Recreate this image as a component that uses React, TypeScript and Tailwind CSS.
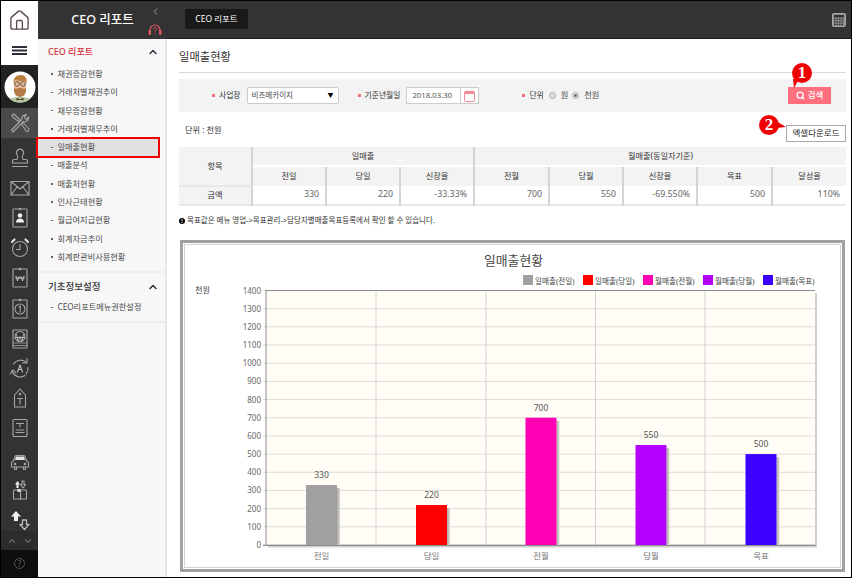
import React from "react";
import { Home, ChevronLeft, ChevronUp, ChevronDown, Search } from "lucide-react";

const S = ({ children, size = 24 }: { children: React.ReactNode; size?: number }) => (
  <svg width={size} height={size} viewBox="0 0 24 24" fill="none" stroke="#a6a6a6" strokeWidth="1.1" strokeLinejoin="round" strokeLinecap="round">
    {children}
  </svg>
);

const railIcons: { h: string; el: React.ReactNode }[] = [
  { h: "h-[30px] bg-[#4a4a4a]", el: <S><path d="M3.500 19L14 8.500C13 6 15 3 18.500 3.500L16 6l2 2.500L20.500 6c.5 3.500-2.500 5.500-5 4.500L5 21z" /><path d="M4 4l2-1 6 6-1.500 1.500L4.500 6zM13.500 13l1.500-1.500 6 6.500c.5 1-1.500 3-2.500 2.500z" /></S> },
  { h: "h-[35px] pt-[5px]", el: <S><path d="M9 8.500a3.500 3.500 0 1 1 6 0c-1 1.500-1 3 0 5h3c1 0 1.500.5 1.500 1.500v2h-15v-2c0-1 .5-1.500 1.500-1.500h3c1-2 1-3.500 0-5zM4.500 20.500h15" /></S> },
  { h: "h-[30px]", el: <S><rect x="3" y="5.500" width="18" height="13.500" rx=".5" /><path d="M3 5.500l9 7.500 9-7.500M3 19l6.500-8.500M21 19l-6.500-8.500" /></S> },
  { h: "h-[30px]", el: <S><rect x="5" y="3" width="14" height="18" rx=".5" /><circle cx="12" cy="3" r=".8" fill="#ddd" /><circle cx="12" cy="9.500" r="2.300" fill="#eee" stroke="none" /><path d="M8 16.500c0-3 2-4 4-4s4 1 4 4z" fill="#eee" stroke="none" /></S> },
  { h: "h-[30px]", el: <S><circle cx="12" cy="13" r="7.500" /><path d="M12 8.500v5H8.500" /><path d="M4 6l2.500-2.500M20 6l-2.500-2.500" strokeWidth="2.200" stroke="#ddd" /></S> },
  { h: "h-[30px]", el: <S><rect x="5" y="3" width="14" height="18" rx=".5" /><circle cx="12" cy="3" r=".8" fill="#ddd" /><path d="M8 10l1.500 5 1.200-4h2.600l1.200 4L16 10M7.500 12h9" strokeWidth=".9" stroke="#ccc" /></S> },
  { h: "h-[31px]", el: <S><rect x="5" y="3" width="14" height="18" rx=".5" /><circle cx="12" cy="3" r=".8" fill="#ddd" /><circle cx="12" cy="12" r="5" /><path d="M11 10l1.200-1v6" /></S> },
  { h: "h-[29px]", el: <S><rect x="5" y="3" width="14" height="18" rx=".5" /><path d="M5 16h14M5 18.500h14" strokeWidth=".8" /><circle cx="12" cy="9.500" r="5" /><path d="M8.500 7.500l1.700 7 1.800-5 1.800 5 1.700-7M7.500 10.500h9" strokeWidth=".8" stroke="#ccc" /></S> },
  { h: "h-[30px]", el: <S><path d="M5.500 8a8.500 8.500 0 0 1 13-1.500M20 11.500a8.500 8.500 0 0 1-2 6.500M17 19.500a8.500 8.500 0 0 1-13-5" /><path d="M19 2.500V7h-4.500M2 18l3-4 3 3" /><path d="M9.500 16l2.500-7 2.500 7M10.500 13.500h3" stroke="#bbb" /></S> },
  { h: "h-[30px]", el: <S><path d="M6.500 9L12 3l5.500 6v12h-11z" /><circle cx="12" cy="8" r=".8" fill="#ddd" /><path d="M9.500 12.500h5M12 12.500V18" /></S> },
  { h: "h-[30px]", el: <S><rect x="5" y="3.500" width="14" height="17" rx="1" /><path d="M8.500 7.500h7M12 7.500V11M8 14h8M8 16.500h8" /></S> },
  { h: "h-[33px] pt-[2px]", el: <S><path d="M5.500 12l1.500-4.500c.3-.7.8-1 1.500-1h7c.7 0 1.200.3 1.500 1l1.500 4.500c1 .3 2 1 2 2v4H3.500v-4c0-1 1-1.700 2-2z" /><path d="M8 7.500h8l1 3.500H7z" fill="#e5e5e5" stroke="none" /><circle cx="7" cy="15" r=".8" fill="#ddd" /><circle cx="17" cy="15" r=".8" fill="#ddd" /><path d="M6.500 18v2.500h2V18M15.500 18v2.500h2V18" /></S> },
  { h: "h-[28px]", el: <S><path d="M9.500 3L7 6.500h1.500V10h2V6.500H12z" fill="#eee" stroke="none" /><path d="M15 10l2.500-3.500H16V3h-2v3.500h-1.500z" /><rect x="5.500" y="12" width="13" height="9" rx=".5" /><path d="M12.500 12v9" /><rect x="9.500" y="11" width="3" height="3" fill="#ddd" stroke="none" /></S> },
  { h: "h-[27px] pt-[5px]", el: <S><path d="M8 3L3 8.500h3V13h4V8.500h3z" fill="#f2f2f2" stroke="none" /><path d="M16.500 21.500l4.500-5h-2.500V12h-4v4.500H12z" strokeWidth="1.300" stroke="#bbb" /></S> },
];

const items = ["채권증감현황", "거래처별채권추이", "채무증감현황", "거래처별채무추이", "일매출현황", "매출분석", "매출처현황", "인사근태현황", "월급여지급현황", "회계자금추이", "회계판관비사용현황"];

const grid = [0, 100, 200, 300, 400, 500, 600, 700, 800, 900, 1000, 1100, 1200, 1300, 1400];
const Y = (v: number) => 545 - (v / 1400) * 254.500;
const bars = [
  { l: "전일", v: 330, c: "#a0a0a0", x: 306 },
  { l: "당일", v: 220, c: "#ff0000", x: 416 },
  { l: "전월", v: 700, c: "#ff00b4", x: 525.500 },
  { l: "당월", v: 550, c: "#b400ff", x: 635.500 },
  { l: "목표", v: 500, c: "#3c00ff", x: 745.500 },
];
const legend = [
  ["일매출(전일)", "#a0a0a0", 523],
  ["일매출(당일)", "#ff0000", 583],
  ["월매출(전월)", "#ff00b4", 643],
  ["월매출(당월)", "#b400ff", 703],
  ["월매출(목표)", "#3c00ff", 763],
] as const;

const Dot = () => <span className="w-[3px] h-[3px] bg-[#f0707a] inline-block mr-[4px]" />;
const th = "bg-[#f3f3f3] font-normal border-l-2 border-[#d5d5d5] text-[#333]";
const td = "border-l-2 border-[#d5d5d5] text-right pr-[6px] text-[#666] text-[8.800px]";

function Chart() {
  return (
    <svg width="655" height="322" viewBox="185 245 655 322" fontFamily="'Noto Sans','Noto Sans CJK KR',sans-serif" className="block">
      <defs>
        <linearGradient id="sh" x1="0" x2="1" y1="0" y2="0">
          <stop offset="0" stopColor="#a8a6a2" />
          <stop offset="1" stopColor="#dedcd6" />
        </linearGradient>
      </defs>
      <text x="513.500" y="265" textAnchor="middle" fontSize="12.800" fill="#444">일매출현황</text>
      <text x="195" y="293" fontSize="8.200" fill="#444">천원</text>
      {legend.map(([t, c, x]) => (
        <g key={t}>
          <rect x={x} y={275} width="10" height="10" fill={c} />
          <text x={x + 12} y="283.500" fontSize="7.600" fill="#444">{t}</text>
        </g>
      ))}
      <rect x="268" y="293" width="549" height="254.500" fill="#cfcfcf" />
      <rect x="266" y="290.500" width="549" height="254.500" fill="#fffdf6" />
      {grid.map((g) => (
        <g key={g}>
          <line x1="263" x2="815" y1={Y(g)} y2={Y(g)} stroke="#dcdcd8" strokeWidth="1" />
          <text x="261" y={Y(g) + 3} textAnchor="end" fontSize="8" fill="#666">{g}</text>
        </g>
      ))}
      {[376, 486, 595.500, 705].map((x) => (
        <line key={x} x1={x} x2={x} y1="290.500" y2="548" stroke="#d2d2d2" />
      ))}
      <line x1="266" x2="815" y1="290.500" y2="290.500" stroke="#8c8c8c" />
      <line x1="266" x2="266" y1="290" y2="546" stroke="#8c8c8c" />
      <line x1="263" x2="815.500" y1="545.300" y2="545.300" stroke="#8c8c8c" strokeWidth="1.300" />
      {bars.map((b) => (
        <g key={b.l}>
          <rect x={b.x + 31} y={Y(b.v) + 3} width="3" height={(b.v / 1400) * 254.500 - 3.500} fill="url(#sh)" />
          <rect x={b.x} y={Y(b.v)} width="31" height={(b.v / 1400) * 254.500} fill={b.c} />
          <text x={b.x + 15.500} y={Y(b.v) - 7} textAnchor="middle" fontSize="8.500" fill="#555">{b.v}</text>
          <text x={b.x + 15.500} y="559" textAnchor="middle" fontSize="8.500" fill="#777">{b.l}</text>
        </g>
      ))}
    </svg>
  );
}

function Avatar() {
  return (
    <svg width="32" height="32" viewBox="0 0 32 32">
      <circle cx="16" cy="16" r="15.500" fill="#fff" />
      <clipPath id="av"><circle cx="16" cy="16" r="15.500" /></clipPath>
      <g clipPath="url(#av)">
        <path d="M5 32c0-5 4-6 11-6s11 1 11 6z" fill="#b3c9a3" />
        <path d="M10 9h12v9c0 3-3 6-6 6s-6-3-6-6z" fill="#eab999" />
        <path d="M10 17c2 1 3 1 4 0h4c1 1 2 1 4 0v3c0 3-3 6-6 6s-6-3-6-6z" fill="#b47a48" />
        <path d="M9.500 13C9 7 12 4 17 4c4 0 6.500 3 5.500 9l-1-3c-3 0-7 0-10.500-1z" fill="#bd7f3f" />
        <circle cx="13" cy="13" r="2.300" fill="none" stroke="#55554c" strokeWidth=".9" />
        <circle cx="19" cy="13" r="2.300" fill="none" stroke="#55554c" strokeWidth=".9" />
        <path d="M12.500 27l3.500 1 3.500-1v2.500L16 28.500l-3.500 1z" fill="#5a3a26" />
      </g>
    </svg>
  );
}

export default function App() {
  return (
    <div className="relative w-[852px] h-[578px] border border-black bg-white overflow-hidden flex text-[8.200px] text-[#4a4a4a]" style={{ fontFamily: "'Noto Sans','Noto Sans CJK KR',sans-serif" }}>
      {/* icon rail */}
      <aside className="w-[37px] shrink-0 flex flex-col bg-[#333]">
        <div className="h-[64px] bg-white flex flex-col items-center">
          <div className="h-[38px] pt-[1px] flex items-center justify-center"><Home size={23} strokeWidth={1.400} color="#5a4a55" /></div>
          <div className="h-[22px] flex items-center justify-center">
            <svg width="15" height="9" viewBox="0 0 15 9" fill="#2e2e3a"><rect width="15" height="2" /><rect y="3.500" width="15" height="2" /><rect y="7" width="15" height="2" /></svg>
          </div>
        </div>
        <div className="h-[43px] bg-[#222] flex items-center justify-center"><Avatar /></div>
        {railIcons.map((ic, i) => (
          <div key={i} className={`${ic.h} shrink-0 flex items-center justify-center`}>
            {ic.el}
          </div>
        ))}
        <div className="flex-1 flex items-center justify-center gap-[6px] bg-[#2c2c2c]">
          <ChevronUp size={10} strokeWidth={3} color="#666" />
          <ChevronDown size={10} strokeWidth={3} color="#666" />
        </div>
        <div className="h-[27px] shrink-0 bg-[#0e0e0e] flex items-center justify-center">
          <div className="w-[11px] h-[11px] rounded-full border border-[#555] text-[#666] text-[8px] leading-[9px] text-center">?</div>
        </div>
      </aside>

      {/* menu panel */}
      <aside className="w-[129px] shrink-0 flex flex-col">
        <div className="h-[38px] bg-[#333] relative flex items-center justify-center">
          <span className="text-white text-[12.500px] font-medium">CEO 리포트</span>
          <ChevronLeft size={11} strokeWidth={1.500} color="#ccc" className="absolute left-[112px] top-[5px]" />
          <svg width="14" height="12" viewBox="0 0 14 12" fill="none" className="absolute left-[110px] top-[23px]">
            <path d="M2 8V6a5 5 0 0 1 10 0v2" stroke="#e0545f" strokeWidth="1.200" />
            <rect x="0.500" y="6" width="2.500" height="5" rx="1" fill="#e0545f" />
            <rect x="11" y="6" width="2.500" height="5" rx="1" fill="#e0545f" />
            <path d="M5.500 5c0-2 3-2 3 0 0 1.200-1.500 1.200-1.500 2.500M7 9v1" stroke="#e0545f" strokeWidth="1" />
          </svg>
        </div>
        <div className="flex-1 bg-[#f7f7f7] border-r-2 border-[#e6e6e6]">
          <div className="pl-[10px] pr-[6px] h-[26px] flex items-center justify-between">
            <span className="text-[#d8333c] text-[9px] font-medium">CEO 리포트</span>
            <ChevronUp size={12} strokeWidth={3} color="#2a3040" />
          </div>
          <ul className="pb-[5px]">
            {items.map((t, i) => (
              <li key={t} className={`h-[18.300px] flex items-center pl-[13px] mr-[7px] ${i === 4 ? "bg-[#e1e1e1]" : ""}`}>
                <span className="w-[1.500px] h-[1.500px] bg-[#666] mr-[5px]" />
                <span>{t}</span>
              </li>
            ))}
          </ul>
          <div className="border-t-2 border-[#eee] pt-[1px]">
            <div className="pl-[10px] pr-[6px] h-[25px] flex items-center justify-between">
              <span className="text-[#333] text-[9.500px] font-medium">기초정보설정</span>
              <ChevronUp size={12} strokeWidth={3} color="#2a3040" />
            </div>
            <div className="h-[16px] flex items-center pl-[13px] mb-[6px]">
              <span className="w-[1.500px] h-[1.500px] bg-[#666] mr-[5px]" />
              <span>CEO리포트메뉴권한설정</span>
            </div>
          </div>
          <div className="border-t-2 border-[#eee]" />
        </div>
      </aside>

      {/* main */}
      <main className="flex-1 flex flex-col min-w-0">
        <header className="h-[38px] shrink-0 bg-[#333] border-b border-[#1c1c1c] flex items-center justify-between pl-[18px] pr-[4px]">
          <div className="w-[63px] h-[20px] rounded-[2px] bg-[#191919] text-white text-[8.500px] flex items-center justify-center mb-[1px]">CEO 리포트</div>
          <svg width="14" height="14" viewBox="0 0 14 14" className="mr-[1px]">
            <rect x="0.500" y="0.500" width="13" height="13" rx="1" fill="#8c8c8c" stroke="#aaa" />
            <rect x="2" y="2" width="10" height="2.500" fill="#333" />
            <path d="M2 6.500h10M2 9h10M2 11.500h10" stroke="#333" strokeDasharray="1.500 1" strokeWidth="1.300" />
          </svg>
        </header>

        <div className="pl-[12px] pr-[5px] flex-1 relative">
          <h1 className="h-[34px] border-b border-[#d8d8d8] font-normal text-[11.300px] text-[#333] leading-[36px]">일매출현황</h1>

          <div className="mt-[6px] h-[33px] bg-[#f3f3f3] flex items-center relative">
            <span className="flex items-center ml-[33px]"><Dot /><span className="text-[#333] text-[7.800px]">사업장</span></span>
            <div className="ml-[6px] w-[92px] h-[17px] bg-white border border-[#ccc] rounded-[2px] flex items-center justify-between px-[4px] text-[7.500px]">
              <span>비즈메카이지</span>
              <span className="text-[6px] text-black">▼</span>
            </div>
            <span className="flex items-center ml-[19px]"><Dot /><span className="text-[#333] text-[7.800px]">기준년월일</span></span>
            <div className="ml-[6px] w-[73px] h-[17px] bg-white border border-[#ccc] flex items-center">
              <span className="flex-1 pl-[5px] text-[7.800px] text-[#555]">2018.03.30</span>
              <span className="w-[18px] h-full border-l border-[#ccc] flex items-center justify-center">
                <svg width="11" height="12" viewBox="0 0 11 12" fill="none">
                  <rect x="0.500" y="1.500" width="10" height="10" rx="1" stroke="#f28a94" />
                  <rect x="0.500" y="1.500" width="10" height="2.500" fill="#f28a94" />
                  <path d="M3 .5v2M8 .5v2" stroke="#f28a94" />
                </svg>
              </span>
            </div>
            <span className="flex items-center ml-[43px]"><Dot /><span className="text-[#333] text-[7.800px]">단위</span></span>
            <span className="ml-[5px] w-[7px] h-[7px] rounded-full bg-[#ddd] border border-[#aaa]" />
            <span className="ml-[5px]">원</span>
            <span className="ml-[4px] w-[7px] h-[7px] rounded-full bg-[#eee] border border-[#aaa] flex items-center justify-center"><span className="w-[3px] h-[3px] rounded-full bg-[#666]" /></span>
            <span className="ml-[5px]">천원</span>
            <button className="ml-auto mr-[15px] w-[43px] h-[17px] bg-[#ff6f7d] text-white text-[8.500px] font-medium flex items-center justify-center gap-[3px]">
              <Search size={9} strokeWidth={3.500} color="#fff" />검색
            </button>
          </div>

          <div className="h-[35px] flex items-center justify-between pl-[6px]">
            <span className="text-[#333] text-[8.200px] pt-[1px]">단위 : 천원</span>
            <button className="w-[60px] h-[17px] mt-[8px] bg-white border border-[#aaa] text-[#222] text-[8.500px] flex items-center justify-center">엑셀다운로드</button>
          </div>

          <table className="w-[667px] table-fixed border-collapse text-center text-[8.200px]">
            <colgroup>
              <col className="w-[73px]" />
              <col className="w-[74px]" />
              <col className="w-[74px]" />
              <col className="w-[74px]" />
              <col className="w-[75px]" />
              <col className="w-[74px]" />
              <col className="w-[74px]" />
              <col className="w-[75px]" />
              <col className="w-[74px]" />
            </colgroup>
            <thead>
              <tr className="h-[19px]">
                <th rowSpan={2} className="bg-[#f3f3f3] font-normal text-[#333]">항목</th>
                <th colSpan={3} className={th}>일매출</th>
                <th colSpan={5} className={th}>월매출(동일자기준)</th>
              </tr>
              <tr className="h-[20px]">
                {["전일", "당일", "신장율", "전월", "당월", "신장율", "목표", "달성율"].map((h, i) => (
                  <th key={i} className={`${th} border-t-2 border-t-white`}>{h}</th>
                ))}
              </tr>
            </thead>
            <tbody>
              <tr className="h-[19px] border-b-2 border-[#e8e8e8]">
                <td className="bg-[#f3f3f3] text-[#333] border-t-2 border-[#e8e8e8]">금액</td>
                {["330", "220", "-33.33%", "700", "550", "-69.550%", "500", "110%"].map((v, i) => (
                  <td key={i} className={td}>{v}</td>
                ))}
              </tr>
            </tbody>
          </table>

          <p className="mt-[9px] flex items-center text-[7.500px] text-[#333] h-[12px]">
            <span className="w-[6px] h-[6px] rounded-full bg-black text-white text-[5px] leading-[6px] text-center font-bold mr-[2px]">!</span>
            목표값은 메뉴 영업-&gt;목표관리-&gt;담당자별매출목표등록에서 확인 할 수 있습니다.
          </p>

          <div className="mt-[13px] ml-[1px] w-[665px] h-[332px] border-[3px] border-[#a0a0a0] p-[1px] bg-white">
            <div className="border border-[#d4d4d4] h-full w-full overflow-hidden">
              <Chart />
            </div>
          </div>
        </div>
      </main>

      {/* annotations */}
      <div className="absolute left-[35px] top-[136px] w-[124px] h-[21px] border-2 border-[#f00000]" />
      <div className="absolute left-[791px] top-[62px] w-[20px] h-[20px] rounded-full bg-[#f00000] text-white text-[17px] font-bold leading-[20px] text-center" style={{ fontFamily: "'Liberation Serif',serif" }}>1</div>
      <svg className="absolute left-[790px] top-[78px]" width="10" height="10"><path d="M2 0h6L3 9z" fill="#f00000" /></svg>
      <div className="absolute left-[758px] top-[114px] w-[20px] h-[20px] rounded-full bg-[#f00000] text-white text-[17px] font-bold leading-[20px] text-center" style={{ fontFamily: "'Liberation Serif',serif" }}>2</div>
      <svg className="absolute left-[775px] top-[120px]" width="11" height="8"><path d="M0 0L10 6 0 7z" fill="#f00000" /></svg>
    </div>
  );
}
